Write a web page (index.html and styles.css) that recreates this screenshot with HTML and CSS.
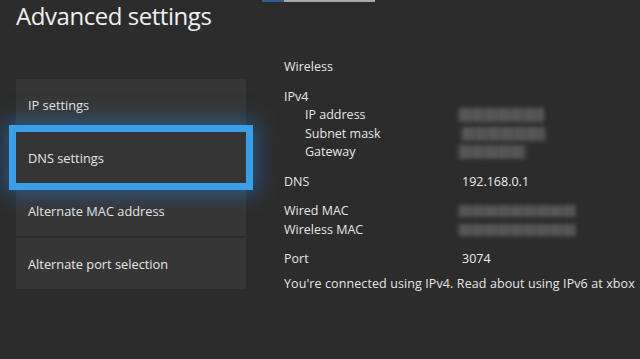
FILE: index.html
```html
<!DOCTYPE html>
<html>
<head>
<meta charset="utf-8">
<link rel="stylesheet" href="styles.css">
</head>
<body>
<div class="page">
  <div class="topbar"><span class="tb-blue"></span><span class="tb-grey"></span></div>
  <h1 class="title">Advanced settings</h1>
  <div class="content">
    <div class="menu">
      <div class="item">IP settings</div>
      <div class="item focused">DNS settings</div>
      <div class="item">Alternate MAC address</div>
      <div class="item">Alternate port selection</div>
    </div>
    <div class="info">
      <div class="group">
        <div class="row"><span class="label">Wireless</span></div>
      </div>
      <div class="group">
        <div class="row"><span class="label">IPv4</span></div>
        <div class="row"><span class="label sub">IP address</span><span class="cell"><span class="blur w86"></span></span></div>
        <div class="row"><span class="label sub">Subnet mask</span><span class="cell"><span class="blur w84 shift"></span></span></div>
        <div class="row"><span class="label sub">Gateway</span><span class="cell"><span class="blur w68"></span></span></div>
      </div>
      <div class="group">
        <div class="row"><span class="label">DNS</span><span class="value">192.168.0.1</span></div>
      </div>
      <div class="group">
        <div class="row"><span class="label">Wired MAC</span><span class="cell"><span class="blur mac w118"></span></span></div>
        <div class="row"><span class="label">Wireless MAC</span><span class="cell"><span class="blur mac w118"></span></span></div>
      </div>
      <div class="group">
        <div class="row"><span class="label">Port</span><span class="value">3074</span></div>
      </div>
      <div class="message">You're connected using IPv4. Read about using IPv6 at xbox</div>
    </div>
  </div>
</div>
</body>
</html>
```

FILE: styles.css
```css
html, body {
  margin: 0;
  padding: 0;
  background: #2c2c2c;
  width: 640px;
  height: 359px;
  overflow: hidden;
}
.page {
  font-family: "Open Sans", "Noto Sans", sans-serif;
  color: #e8e8e8;
  width: 640px;
  height: 359px;
  overflow: hidden;
}
.topbar {
  display: flex;
  height: 2px;
  padding-left: 262px;
}
.tb-blue { width: 22px; background: #2f5f8c; }
.tb-grey { width: 91px; background: #a8a8a8; }
.title {
  margin: 0;
  padding-left: 16px;
  font-weight: 400;
  font-size: 24px;
  line-height: 28px;
  color: #f0f0f0;
  letter-spacing: -0.45px;
}
.content {
  display: flex;
  margin-top: 28px;
}
.menu {
  margin-top: 21px;
  margin-left: 16px;
  width: 230px;
  display: flex;
  flex-direction: column;
  gap: 2px;
}
.item {
  height: 51px;
  background: #363636;
  display: flex;
  align-items: center;
  padding-left: 12px;
  font-size: 12.8px;
  color: #e6e6e6;
}
.item.focused {
  position: relative;
  background: #353535;
  box-shadow: 0 0 0 7px #3b9fe8, 0 0 20px 11px rgba(40, 130, 215, 0.5);
  z-index: 1;
}
.info {
  margin-left: 38px;
  font-size: 12.5px;
  line-height: 18.5px;
  color: #e6e6e6;
  min-width: 0;
  flex: 1;
}
.group { margin-bottom: 11px; }
.row {
  display: grid;
  grid-template-columns: 174px auto;
}
.label.sub { padding-left: 21px; }
.value { color: #ececec; padding-left: 4px; }
.cell { display: flex; align-items: center; }
.blur {
  display: block;
  height: 14px;
  background:
    repeating-linear-gradient(90deg, #4a4a4a 0 3px, #5c5c5c 3px 7px, #4d4d4d 7px 9px, #585858 9px 13px);
  filter: blur(1.9px);
}
.blur.mac { height: 12px; }
.shift { margin-left: 3px; }
.w86 { width: 86px; }
.w84 { width: 84px; }
.w68 { width: 68px; }
.w118 { width: 118px; }
.message {
  margin-top: -4.5px;
  white-space: nowrap;
  overflow: hidden;
  letter-spacing: 0.1px;
}
```
